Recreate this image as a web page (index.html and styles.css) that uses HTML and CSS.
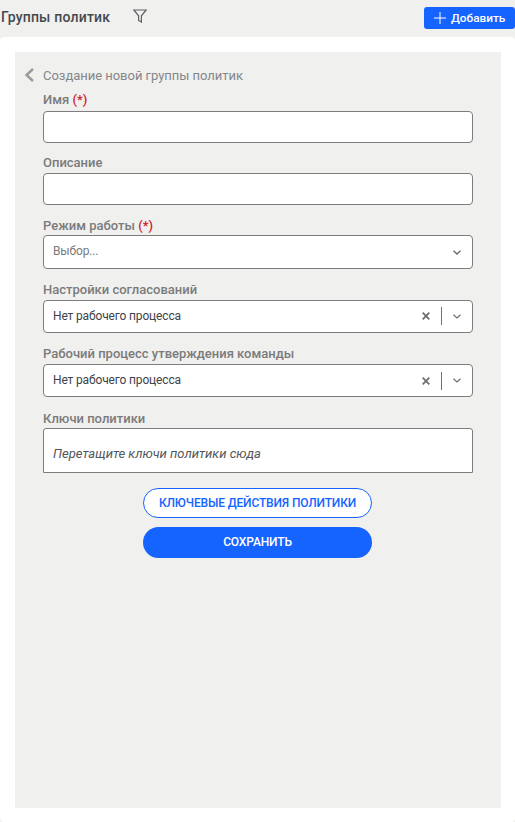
FILE: index.html
```html
<!DOCTYPE html>
<html lang="en">
<head>
    <meta charset="UTF-8">
    <meta name="viewport" content="width=device-width, initial-scale=1.0">
    <title>Группы политик</title>
    <link rel="stylesheet" href="styles.css">
</head>
<body>
    <header class="topbar">
        <div class="topbar-left">
            <h1>Группы политик</h1>
            <svg class="filter-icon" width="14" height="14" viewBox="0 0 14 14" fill="none" stroke="#5c5f62" stroke-width="1.2">
                <path d="M0.8 1H13.2L8.4 6.8V13L5.6 11.4V6.8Z"/>
            </svg>
        </div>
        <button class="add-button">
            <svg width="12" height="12" viewBox="0 0 12 12" stroke="#fff" stroke-width="1"><path d="M6 0V12M0 6H12"/></svg>
            Добавить
        </button>
    </header>

    <main class="card">
        <section class="panel">
            <div class="back-row">
                <svg width="11" height="14" viewBox="0 0 11 14" fill="none" stroke="#9a9a9a" stroke-width="2.4"><path d="M9 1L2.5 7L9 13"/></svg>
                <span>Создание новой группы политик</span>
            </div>

            <form class="form">
                <div class="form-group group-name">
                    <label>Имя <span class="required">(*)</span></label>
                    <input type="text" class="field">
                </div>
                <div class="form-group group-desc">
                    <label>Описание</label>
                    <input type="text" class="field">
                </div>
                <div class="form-group group-mode">
                    <label>Режим работы <span class="required">(*)</span></label>
                    <div class="field select">
                        <span class="placeholder">Выбор...</span>
                        <svg class="chevron" width="8" height="5" viewBox="0 0 10 6" fill="none" stroke="#6f6f6f" stroke-width="1.9"><path d="M0.6 0.8L5 4.8L9.4 0.8"/></svg>
                    </div>
                </div>
                <div class="form-group group-select">
                    <label>Настройки согласований</label>
                    <div class="field select">
                        <span class="value">Нет рабочего процесса</span>
                        <svg class="clear" width="8" height="8" viewBox="0 0 8 8" stroke="#6f6f6f" stroke-width="1.8"><path d="M0.7 0.7L7.3 7.3M7.3 0.7L0.7 7.3"/></svg>
                        <i class="divider"></i>
                        <svg class="chevron" width="8" height="5" viewBox="0 0 10 6" fill="none" stroke="#6f6f6f" stroke-width="1.5"><path d="M0.6 0.8L5 4.8L9.4 0.8"/></svg>
                    </div>
                </div>
                <div class="form-group group-select">
                    <label>Рабочий процесс утверждения команды</label>
                    <div class="field select">
                        <span class="value">Нет рабочего процесса</span>
                        <svg class="clear" width="8" height="8" viewBox="0 0 8 8" stroke="#6f6f6f" stroke-width="1.8"><path d="M0.7 0.7L7.3 7.3M7.3 0.7L0.7 7.3"/></svg>
                        <i class="divider"></i>
                        <svg class="chevron" width="8" height="5" viewBox="0 0 10 6" fill="none" stroke="#6f6f6f" stroke-width="1.5"><path d="M0.6 0.8L5 4.8L9.4 0.8"/></svg>
                    </div>
                </div>
                <div class="form-group group-keys">
                    <label>Ключи политики</label>
                    <div class="dropzone">Перетащите ключи политики сюда</div>
                </div>
                <div class="actions">
                    <button type="button" class="pill pill-outline">КЛЮЧЕВЫЕ ДЕЙСТВИЯ ПОЛИТИКИ</button>
                    <button type="button" class="pill pill-solid">СОХРАНИТЬ</button>
                </div>
            </form>
        </section>
    </main>
</body>
</html>
```

FILE: styles.css
```css
:root {
    --primary-color: #1564ff;
    --background-color: #f0f0ee;
    --label-color: #7b7b7b;
    --border-color: #7d7d7d;
    --text-color: #3d4348;
}
* {
    margin: 0;
    padding: 0;
    box-sizing: border-box;
}
html, body {
    height: 100%;
}
body {
    font-family: Roboto, "Liberation Sans", sans-serif;
    font-size: 12px;
    background-color: var(--background-color);
    color: var(--text-color);
    display: flex;
    flex-direction: column;
    overflow: hidden;
}
.topbar {
    height: 37px;
    flex: none;
    display: flex;
    align-items: flex-start;
    justify-content: space-between;
    padding: 7px 0 0 1px;
}
.topbar-left {
    display: flex;
    align-items: center;
    gap: 23px;
}
.topbar h1 {
    font-size: 14px;
    font-weight: 500;
    letter-spacing: 0.2px;
    line-height: 20px;
    color: #44494e;
}
.filter-icon {
    margin-top: -2px;
}
.add-button {
    width: 91px;
    height: 22px;
    display: flex;
    align-items: center;
    gap: 5px;
    padding-left: 10px;
    background-color: var(--primary-color);
    color: #fff;
    border: none;
    border-radius: 3px;
    font-family: inherit;
    font-size: 11.8px;
    font-weight: 500;
}
.card {
    flex: 1;
    background-color: #fff;
    border-radius: 4px;
    padding: 15px 14px 14px 15px;
    display: flex;
}
.panel {
    flex: 1;
    background-color: var(--background-color);
    padding: 14px 28px 0 9px;
}
.back-row {
    height: 18px;
    display: flex;
    align-items: center;
    gap: 8px;
    font-size: 13px;
    letter-spacing: -0.03px;
    color: #84878a;
}
.form {
    margin-left: 19px;
    padding-top: 8px;
}
.form-group label {
    display: block;
    font-size: 13px;
    font-weight: 500;
    line-height: 15px;
    color: var(--label-color);
}
.group-name label {
    margin-bottom: 4px;
}
.group-desc {
    margin-top: 12px;
}
.group-desc label {
    margin-bottom: 3px;
}
.group-mode {
    margin-top: 13.4px;
}
.group-mode label {
    margin-bottom: 2px;
}
.group-select {
    margin-top: 13.3px;
}
.group-select label {
    margin-bottom: 2.5px;
}
.group-keys {
    margin-top: 14px;
}
.group-keys label {
    margin-bottom: 1.8px;
}
.required {
    color: #d0202a;
}
.field {
    display: block;
    width: 100%;
    height: 32px;
    background-color: #fff;
    border: 1px solid var(--border-color);
    border-radius: 4px;
}
.select {
    height: 33.5px;
    display: flex;
    align-items: center;
    padding: 0 11px 0 9px;
    font-size: 12px;
    letter-spacing: -0.15px;
}
.placeholder {
    flex: 1;
    color: #7b7b7b;
    margin-top: -2px;
}
.value {
    flex: 1;
    color: var(--text-color);
    margin-top: -1px;
}
.clear {
    margin-right: 11px;
}
.divider {
    width: 1px;
    height: 18px;
    background-color: #6f6f6f;
    margin-right: 11px;
}
.dropzone {
    height: 44.5px;
    background-color: #fff;
    border: 1px solid var(--border-color);
    border-radius: 3px 3px 0 0;
    padding: 17px 9px 0;
    font-size: 13px;
    font-style: italic;
    line-height: 16px;
    color: #53575b;
}
.actions {
    margin-top: 15px;
    margin-right: 1px;
    display: flex;
    flex-direction: column;
    align-items: center;
    gap: 9px;
}
.pill {
    width: 229px;
    border-radius: 16px;
    font-family: inherit;
    font-size: 12px;
    font-weight: 500;
    letter-spacing: -0.15px;
}
.pill-outline {
    height: 30px;
    background-color: #fff;
    color: var(--primary-color);
    border: 1px solid var(--primary-color);
}
.pill-solid {
    height: 31px;
    background-color: var(--primary-color);
    color: #fff;
    border: none;
}
```
